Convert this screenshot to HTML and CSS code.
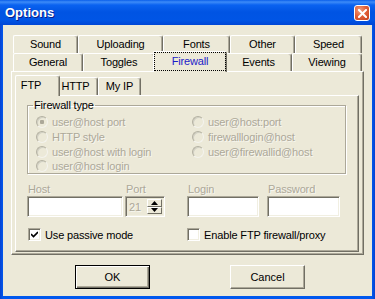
FILE: index.html
```html
<!DOCTYPE html>
<html lang="en">
<head>
  <meta charset="utf-8" />
  <title>Options</title>
  <link rel="stylesheet" href="styles.css">
</head>
<body>
  <div class="window">
    <!-- title bar -->
    <div class="titlebar">
      <span class="title">Options</span>
      <span class="close" aria-label="Close">
        <svg width="9" height="9" viewBox="0 0 9 9"><path d="M1 1L8 8M8 1L1 8" stroke="#fff" stroke-width="2" stroke-linecap="square"/></svg>
      </span>
    </div>

    <div class="client">
      <!-- outer tabs, two rows -->
      <div class="tab-row back">
        <div class="tab">Sound</div>
        <div class="tab">Uploading</div>
        <div class="tab">Fonts</div>
        <div class="tab">Other</div>
        <div class="tab">Speed</div>
      </div>
      <div class="tab-row front">
        <div class="tab">General</div>
        <div class="tab">Toggles</div>
        <div class="tab active"><span class="focus">Firewall</span></div>
        <div class="tab">Events</div>
        <div class="tab">Viewing</div>
      </div>

      <div class="panel">
        <div class="subtabs">
          <div class="tab active">FTP</div>
          <div class="tab">HTTP</div>
          <div class="tab">My IP</div>
        </div>

        <div class="subpanel">
          <fieldset class="group">
            <legend>Firewall type</legend>
            <div class="radios">
              <label class="radio checked"><i></i>user@host port</label>
              <label class="radio"><i></i>user@host:port</label>
              <label class="radio"><i></i>HTTP style</label>
              <label class="radio"><i></i>firewalllogin@host</label>
              <label class="radio"><i></i>user@host with login</label>
              <label class="radio"><i></i>user@firewallid@host</label>
              <label class="radio"><i></i>user@host login</label>
            </div>
          </fieldset>

          <div class="fields">
            <div class="field host">
              <span class="lbl">Host</span>
              <span class="input"></span>
            </div>
            <div class="field port">
              <span class="lbl">Port</span>
              <span class="input spin">
                <span class="val">21</span>
                <span class="spinbtns">
                  <span class="sb"><svg width="7" height="4" viewBox="0 0 7 4"><path d="M3.5 0L7 4H0z" fill="#000"/></svg></span>
                  <span class="sb"><svg width="7" height="4" viewBox="0 0 7 4"><path d="M0 0H7L3.5 4z" fill="#000"/></svg></span>
                </span>
              </span>
            </div>
            <div class="field login">
              <span class="lbl">Login</span>
              <span class="input"></span>
            </div>
            <div class="field pass">
              <span class="lbl">Password</span>
              <span class="input"></span>
            </div>
          </div>

          <div class="checks">
            <label class="check on">
              <span class="box"><svg width="7" height="7" viewBox="0 0 7 7"><path d="M0 3L2.5 5.5L7 1" stroke="#000" stroke-width="1.6" fill="none"/></svg></span>
              Use passive mode
            </label>
            <label class="check second">
              <span class="box"></span>
              Enable FTP firewall/proxy
            </label>
          </div>
        </div>
      </div>

      <div class="buttons">
        <button class="btn default">OK</button>
        <button class="btn">Cancel</button>
      </div>
    </div>
  </div>
</body>
</html>
```

FILE: styles.css
```css
/* Windows XP style Options dialog */
*{box-sizing:border-box;margin:0;padding:0;}

:root{
  --face:#ECE9D8;
  --shadow:#ACA899;
  --dark:#716F64;
  --light:#fff;
  --dis:#ACA899;
}

body{
  width:375px;
  height:299px;
  overflow:hidden;
  font-family:"Liberation Sans",Arial,sans-serif;
  font-size:11px;
  letter-spacing:-.15px;
  color:#000;
  background:#fff;
}

.window{
  width:375px;
  height:299px;
  display:flex;
  flex-direction:column;
  background:linear-gradient(90deg,#0842D0 0,#0058EE 3px,#0058EE 372px,#0842D0 375px);
}

/* ── title bar ── */
.titlebar{
  height:25px;
  flex:none;
  display:flex;
  align-items:center;
  justify-content:space-between;
  padding:0 5px 0 5px;
  background:linear-gradient(180deg,#0A5EEA 0,#3D8BF8 2px,#0A62F0 5px,#0054E3 12px,#0055E5 20px,#0046D5 25px);
}
.title{
  color:#fff;
  font-weight:bold;
  font-size:13px;
  letter-spacing:0;
  text-shadow:1px 1px #0A1E8A;
}
.close{
  width:16px;
  height:16px;
  margin-top:1px;
  display:flex;
  align-items:center;
  justify-content:center;
  border:1px solid #fff;
  border-radius:3px;
  background:radial-gradient(circle at 35% 30%,#F0A080 0,#E2613A 45%,#C4401D 100%);
}

/* ── client area ── */
.client{
  flex:1;
  margin:0 3px 3px;
  background:var(--face);
  padding:10px 8px 0;
  display:flex;
  flex-direction:column;
}

/* classic tabs */
.tab-row{
  display:flex;
  height:18px;
  padding:0 2px;
}
.tab{
  display:flex;
  align-items:center;
  justify-content:center;
  height:100%;
  background:var(--face);
  border-top:1px solid var(--light);
  border-left:1px solid var(--light);
  border-right:1px solid var(--dark);
  box-shadow:inset -1px 0 var(--shadow);
  border-radius:2px 3px 0 0;
  white-space:nowrap;
  padding-bottom:1px;
}
.back .tab:nth-child(1){width:65px;}
.back .tab:nth-child(2){width:85px;}
.back .tab:nth-child(3){width:67px;}
.back .tab:nth-child(4){width:65px;}
.back .tab:nth-child(5){width:67px;}
.front .tab:nth-child(1){width:70px;}
.front .tab:nth-child(2){width:72px;}
.front .tab:nth-child(3){width:70px;}
.front .tab:nth-child(4){width:67px;}
.front .tab:nth-child(5){width:70px;}

.tab.active{
  position:relative;
  z-index:1;
  margin:-2px -2px -1px;
  height:calc(100% + 3px);
  padding-bottom:3px;
}
.front .tab.active{width:74px;}
.focus{
  color:#1C1CC8;
  outline:1px dotted #000;
  display:flex;
  align-items:center;
  justify-content:center;
  width:70px;
  height:17px;
  margin-top:1px;
}

/* outer panel */
.panel{
  height:184px;
  flex:none;
  border-top:1px solid var(--light);
  border-left:1px solid var(--light);
  border-right:1px solid var(--dark);
  border-bottom:1px solid var(--dark);
  box-shadow:inset -1px -1px var(--shadow);
  padding:5px 4px 0 3px;
  display:flex;
  flex-direction:column;
}

.subtabs{
  display:flex;
  height:18px;
  padding:0 2px;
}
.subtabs .tab:nth-child(1){width:41px;}
.subtabs .tab:nth-child(2){width:40px;padding-right:5px;}
.subtabs .tab:nth-child(3){width:43px;}
.subtabs .tab.active{width:45px;padding-right:13px;padding-top:1px;}

.subpanel{
  height:157px;
  border-top:1px solid var(--light);
  border-left:1px solid var(--light);
  border-right:1px solid var(--dark);
  border-bottom:1px solid var(--dark);
  box-shadow:inset -1px -1px var(--shadow);
  padding:3px 11px 0 11px;
}

/* group box */
.group{
  border:1px solid var(--shadow);
  box-shadow:inset 1px 1px var(--light),1px 1px var(--light);
  height:75px;
  padding:3px 0 0 8px;
  margin-right:1px;
}
.group legend{
  padding:0 1px;
  margin-left:-3px;
  line-height:13px;
}
.radios{
  display:grid;
  grid-template-columns:156px 1fr;
  grid-auto-rows:14.7px;
}
.radio{
  display:flex;
  align-items:center;
  gap:4px;
  color:var(--dis);
  text-shadow:1px 1px rgba(255,255,255,.6);
  white-space:nowrap;
}
.radio i{
  width:12px;
  height:12px;
  border-radius:50%;
  flex:none;
  border:1px solid;
  border-color:#B4B1A2 #F4F3EE #F4F3EE #B4B1A2;
  box-shadow:inset 1px 1px #D2D0C4;
  background:var(--face);
}
.radio.checked i{
  background:radial-gradient(circle,#ACA899 0 2px,var(--face) 2.5px);
}

/* input fields */
.fields{
  display:flex;
  margin-top:8px;
}
.field{
  display:flex;
  flex-direction:column;
}
.lbl{
  color:var(--dis);
  text-shadow:1px 1px rgba(255,255,255,.6);
  height:14px;
  line-height:14px;
  padding-left:1px;
}
.input{
  display:block;
  height:21px;
  background:#fff;
  border:1px solid;
  border-color:var(--shadow) var(--light) var(--light) var(--shadow);
  box-shadow:inset 1px 1px var(--dark),inset -1px -1px #F1EFE2;
}
.host .input{width:96px;}
.port{margin-left:2px;}
.port .input{width:40px;}
.login{margin-left:22px;}
.login .input{width:72px;}
.pass{margin-left:8px;}
.pass .input{width:73px;}

.spin{
  display:flex;
  justify-content:space-between;
  background:var(--face);
  padding:2px 2px 2px 3px;
}
.val{
  color:var(--dis);
  text-shadow:1px 1px rgba(255,255,255,.6);
  line-height:16px;
}
.spinbtns{
  display:flex;
  flex-direction:column;
  width:15px;
}
.sb{
  flex:1;
  display:flex;
  align-items:center;
  justify-content:center;
  background:var(--face);
  border-top:1px solid var(--light);
  border-left:1px solid var(--light);
  border-right:1px solid var(--dark);
  border-bottom:1px solid var(--dark);
}

/* checkboxes */
.checks{
  display:flex;
  margin-top:11px;
}
.check{
  display:flex;
  align-items:center;
  gap:4px;
  white-space:nowrap;
  padding-left:1px;
}
.check.second{margin-left:53px;}
.box{
  width:13px;
  height:13px;
  display:flex;
  align-items:center;
  justify-content:center;
  background:#fff;
  border:1px solid;
  border-color:var(--shadow) var(--light) var(--light) var(--shadow);
  box-shadow:inset 1px 1px var(--dark),inset -1px -1px #F1EFE2;
}

/* dialog buttons */
.buttons{
  display:flex;
  gap:80px;
  padding-left:64px;
  margin-top:10px;
}
.btn{
  width:75px;
  height:24px;
  font:inherit;
  color:#000;
  background:var(--face);
  border:1px solid;
  border-color:var(--light) var(--dark) var(--dark) var(--light);
  box-shadow:inset -1px -1px var(--shadow);
}
.btn.default{
  border:1px solid #000;
  box-shadow:inset 1px 1px var(--light),inset -1px -1px var(--dark),inset -2px -2px var(--shadow);
}
```
